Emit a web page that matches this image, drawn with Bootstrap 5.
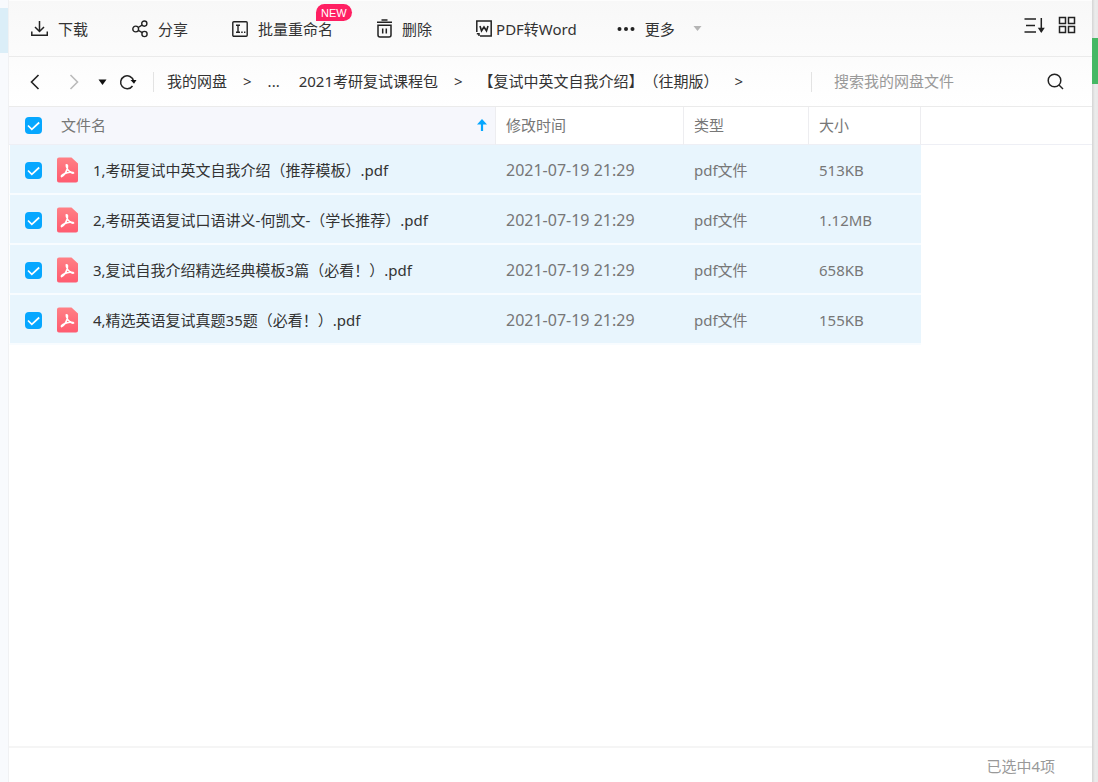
<!DOCTYPE html>
<html lang="zh-CN">
<head>
<meta charset="utf-8">
<meta name="viewport" content="width=device-width, initial-scale=1">
<title>我的网盘</title>
<link rel="stylesheet" href="https://cdn.jsdelivr.net/npm/bootstrap@5.3.0/dist/css/bootstrap.min.css">
<style>
  body { font: 15px/20px "Noto Sans", "Noto Sans CJK SC", sans-serif; font-kerning: none; text-spacing-trim: space-all; color: #333; background: #fff; }
  svg { display: block; flex: none; }
  .side-left { width: 9px; padding-top: 8px; background: #f8fafd; border-right: 1px solid #f0f1f3; }
  .side-left div { height: 45px; background: #dbeef8; }
  .side-right { width: 6px; padding-top: 38px; background: linear-gradient(90deg, #d4d4d4, #ececec 50%, #e8e8e8); }
  .side-right div { height: 46px; background: #45b864; }
  .main-pane { min-width: 0; }
  .top-area { background: linear-gradient(#f8f8f8, #fff); border-top: 1px solid #fdfdfd; }
  .toolbar { height: 56px; padding: 0 16px 0 22px; gap: 44px; border-bottom: 1px solid #ebebeb; }
  .tool { display: flex; align-items: center; gap: 10px; padding: 0; border: 0; background: none; color: #333; white-space: nowrap; line-height: 18px; }
  .tool-word { gap: 4px; }
  .tool-more { margin-left: -4px; }
  .tool-more .caret { margin-left: 8px; }
  .new-tag { top: -16px; left: 84px; height: 17px; padding: 0 5px; border-radius: 9px 9px 9px 0; background: #ff1f62; color: #fff; font: 11px/18px "Liberation Sans", sans-serif; }
  .views { gap: 13px; margin-bottom: 7px; }
  .pathbar { height: 50px; padding-left: 18px; border-bottom: 1px solid #ebebeb; }
  .refresh { margin-left: 12px; }
  .crumbs { gap: 16px; padding-left: 13px; height: 20px; border-left: 1px solid #e3e3e3; margin-left: 16px; white-space: nowrap; line-height: 18px; }
  .crumbs a { color: #333; text-decoration: none; }
  .crumbs .dots { margin-right: 3px; }
  .search { width: 281px; height: 20px; padding: 0 28px 0 22px; border-left: 1px solid #e3e3e3; }
  .search input { border: 0; padding: 0 0 2px; min-width: 0; background: none; outline: 0; line-height: 18px; }
  .search input::placeholder { color: #999; opacity: 1; }
  .files { table-layout: fixed; width: 100%; border-collapse: separate; border-spacing: 0; color: #777; }
  .files th { height: 38px; padding: 0 10px 1px; font-weight: 400; color: #777; border-right: 1px solid #ededf0; border-bottom: 1px solid #eeeff5; line-height: 18px; }
  .files th:first-child { background: #f6f7fc; padding-left: 16px; padding-right: 8px; }
  .files th:last-child { border-right: 0; }
  .files td { height: 50px; padding: 2px 10px 0; background: #e8f5fd; border-bottom: 2px solid #f8fcff; }
  .files td:first-child { padding-left: 15px; border-left: 1px solid #fff; color: #333; }
  .files td:last-child { background: #fff; border-color: #fff; }
  .files td time { font-size: 16px; }
  .c-name { width: 487px; } .c-time { width: 188px; } .c-type { width: 125px; } .c-size { width: 112px; }
  .files .form-check-input { width: 17px; height: 17px; margin: 0; border: 0; border-radius: 4px; flex: none; }
  .files .form-check-input:checked { background-color: #06a7ff; background-size: 17px 17px; background-image: url("data:image/svg+xml,%3csvg xmlns='http://www.w3.org/2000/svg' viewBox='0 0 17 17'%3e%3cpath fill='none' stroke='%23fff' stroke-width='1.700' d='M3 8.500l3.800 3.800 7.400-6.800'/%3e%3c/svg%3e"); }
  .files th label { margin-left: 19px; }
  .files .pdf { margin: 0 15px 0 15px; }
  .status { height: 36px; padding-right: 37px; padding-top: 1px; border-top: 2px solid #f5f5f5; color: #999; }
</style>
</head>
<body>
<svg width="0" height="0" class="position-absolute" aria-hidden="true">
  <defs>
    <linearGradient id="pink" x2="0" y2="1"><stop stop-color="#ff8085"/><stop offset="1" stop-color="#ff5b70"/></linearGradient>
    <symbol id="pdf" viewBox="0 0 21 26">
      <path fill="url(#pink)" d="M2 .5h12.500L21 6.500V23.500a2 2 0 0 1-2 2H2a2 2 0 0 1-2-2V2.500a2 2 0 0 1 2-2z"/>
      <path fill="none" stroke="#fff" stroke-width="1.600" stroke-linecap="round" stroke-linejoin="round" d="M9.300 7.800c1.600-.2 1.200 2 .8 4.200-.9 3.200-3.400 7.200-5.600 7.600-.8-1.200 3-3.200 5.800-3.900 3-.6 6-.9 6.300.2-.8.8-3.800-.8-5.900-3.500-1-1.400-1.500-3.400-1.400-4.600z"/>
    </symbol>
  </defs>
</svg>
<div class="d-flex min-vh-100">
  <div class="side-left flex-shrink-0"><div></div></div>
  <main class="main-pane flex-grow-1 d-flex flex-column">
    <div class="top-area">
      <div class="toolbar d-flex align-items-center">
        <button type="button" class="tool"><svg width="17" height="17" viewBox="0 0 17 17" fill="none" stroke="#222" stroke-width="1.500"><path d="M8.500 1v10M4 7l4.500 4.500L13 7M.8 11.500v3.700h15.500v-3.700"/></svg>下载</button>
        <button type="button" class="tool"><svg width="16" height="18" viewBox="0 0 16 18" fill="none" stroke="#222" stroke-width="1.400"><circle cx="3.700" cy="9" r="2.900"/><circle cx="12.300" cy="3.600" r="2.600"/><circle cx="12.500" cy="14" r="2.600"/><path d="M6.200 7.500l3.800-2.400M6.300 10.400l4 2.300"/></svg>分享</button>
        <button type="button" class="tool position-relative"><svg width="16" height="16" viewBox="0 0 16 16" fill="none" stroke="#222" stroke-width="1.400"><rect x=".8" y=".8" width="14.400" height="14.400" rx="1"/><path d="M4 4.300h4M6 4.300v7M4 11.300h4M9.200 11.300h1.500M12 11.300h1.400"/></svg>批量重命名<span class="new-tag position-absolute">NEW</span></button>
        <button type="button" class="tool"><svg width="15" height="19" viewBox="0 0 15 19" fill="none" stroke="#222" stroke-width="1.500"><path d="M0 3.300h15M4.500 1h6M1 6.200h13v9.800a2 2 0 0 1-2 2H3a2 2 0 0 1-2-2zM5.700 9.500v5M9.300 9.500v5"/></svg>删除</button>
        <button type="button" class="tool tool-word"><svg width="16" height="17" viewBox="0 0 16 17" fill="none" stroke="#222" stroke-width="1.500"><path d="M.8 12V1h14.400v15H4M.8 13.800h2.200V16"/><path stroke-width="1.600" d="M4 6l1.500 4.800L8 7l2.500 3.800L12 6"/></svg>PDF转Word</button>
        <button type="button" class="tool tool-more"><svg width="18" height="16" viewBox="0 0 18 16" fill="#222"><circle cx="2.500" cy="8" r="2"/><circle cx="9" cy="8" r="2"/><circle cx="15.500" cy="8" r="2"/></svg>更多<svg class="caret" width="9" height="5" viewBox="0 0 9 5" fill="#b5b5b5"><path d="M.5 0h8l-4 5z"/></svg></button>
        <div class="views d-flex ms-auto">
          <button type="button" class="tool" aria-label="排序"><svg width="21" height="17" viewBox="0 0 21 17" fill="none" stroke="#222" stroke-width="1.500"><path d="M.5 2H12M2 8.500h9M.5 15H12M17.300 1v13.500"/><path fill="#222" stroke="none" d="M13.800 10.800h7L17.300 16z"/></svg></button>
          <button type="button" class="tool" aria-label="网格"><svg width="18" height="18" viewBox="0 0 18 18" fill="none" stroke="#222" stroke-width="1.500"><path d="M1.500 1.500h6v6h-6zM10.500 1.500h6v6h-6zM1.500 10.500h6v6h-6zM10.500 10.500h6v6h-6z"/></svg></button>
        </div>
      </div>
      <div class="pathbar d-flex align-items-center">
        <button type="button" class="tool me-4" aria-label="后退"><svg width="16" height="16" viewBox="0 0 16 16" fill="none" stroke="#222" stroke-width="1.600"><path d="M11.500 1L4.500 8l7 7"/></svg></button>
        <button type="button" class="tool" aria-label="前进"><svg width="15" height="16" viewBox="0 0 15 16" fill="none" stroke="#bbb" stroke-width="1.600"><path d="M3.500 1l7 7-7 7"/></svg></button>
        <button type="button" class="tool ms-3" aria-label="历史"><svg width="9" height="6" viewBox="0 0 9 6" fill="#111"><path d="M.5.500h8l-4 5.500z"/></svg></button>
        <button type="button" class="tool refresh" aria-label="刷新"><svg width="18" height="16" viewBox="0 0 18 16" fill="none" stroke="#222" stroke-width="1.500"><path d="M13.500 12A6.500 6.500 0 1 1 14.500 7"/><path fill="#111" stroke="none" d="M11.500 6h6l-2.500 3.800z"/></svg></button>
        <nav class="crumbs d-flex" aria-label="路径">
          <a href="#">我的网盘</a><span>&gt;</span><a href="#" class="dots">...</a><a href="#">2021考研复试课程包</a><span>&gt;</span><a href="#">【复试中英文自我介绍】（往期版）</a><span>&gt;</span>
        </nav>
        <div class="search d-flex align-items-center ms-auto">
          <input class="flex-grow-1" type="search" placeholder="搜索我的网盘文件" aria-label="搜索我的网盘文件">
          <button type="button" class="tool" aria-label="搜索"><svg width="17" height="17" viewBox="0 0 17 17" fill="none" stroke="#222" stroke-width="1.500"><circle cx="7.500" cy="7.500" r="6.300"/><path d="M12 12l4 4"/></svg></button>
        </div>
      </div>
    </div>
    <table class="files">
      <colgroup><col class="c-name"><col class="c-time"><col class="c-type"><col class="c-size"><col></colgroup>
      <thead><tr>
        <th scope="col"><div class="d-flex align-items-center"><input class="form-check-input" type="checkbox" checked id="all"><label for="all">文件名</label><svg class="ms-auto" width="10" height="12" viewBox="0 0 10 12" fill="#06a7ff"><path d="M5 0l5 5.500H6.100V12H3.900V5.500H0z"/></svg></div></th>
        <th scope="col">修改时间</th><th scope="col">类型</th><th scope="col">大小</th><th></th>
      </tr></thead>
      <tbody>
        <tr><td><div class="d-flex align-items-center"><input class="form-check-input" type="checkbox" checked id="f1"><svg class="pdf" width="21" height="26"><use href="#pdf"/></svg><label for="f1">1,考研复试中英文自我介绍（推荐模板）.pdf</label></div></td><td><time>2021-07-19 21:29</time></td><td>pdf文件</td><td>513KB</td><td></td></tr>
        <tr><td><div class="d-flex align-items-center"><input class="form-check-input" type="checkbox" checked id="f2"><svg class="pdf" width="21" height="26"><use href="#pdf"/></svg><label for="f2">2,考研英语复试口语讲义-何凯文-（学长推荐）.pdf</label></div></td><td><time>2021-07-19 21:29</time></td><td>pdf文件</td><td>1.12MB</td><td></td></tr>
        <tr><td><div class="d-flex align-items-center"><input class="form-check-input" type="checkbox" checked id="f3"><svg class="pdf" width="21" height="26"><use href="#pdf"/></svg><label for="f3">3,复试自我介绍精选经典模板3篇（必看！）.pdf</label></div></td><td><time>2021-07-19 21:29</time></td><td>pdf文件</td><td>658KB</td><td></td></tr>
        <tr><td><div class="d-flex align-items-center"><input class="form-check-input" type="checkbox" checked id="f4"><svg class="pdf" width="21" height="26"><use href="#pdf"/></svg><label for="f4">4,精选英语复试真题35题（必看！）.pdf</label></div></td><td><time>2021-07-19 21:29</time></td><td>pdf文件</td><td>155KB</td><td></td></tr>
      </tbody>
    </table>
    <footer class="status d-flex align-items-center justify-content-end mt-auto">已选中4项</footer>
  </main>
  <div class="side-right flex-shrink-0"><div></div></div>
</div>
<script src="https://cdn.jsdelivr.net/npm/bootstrap@5.3.0/dist/js/bootstrap.bundle.min.js"></script>
</body>
</html>
